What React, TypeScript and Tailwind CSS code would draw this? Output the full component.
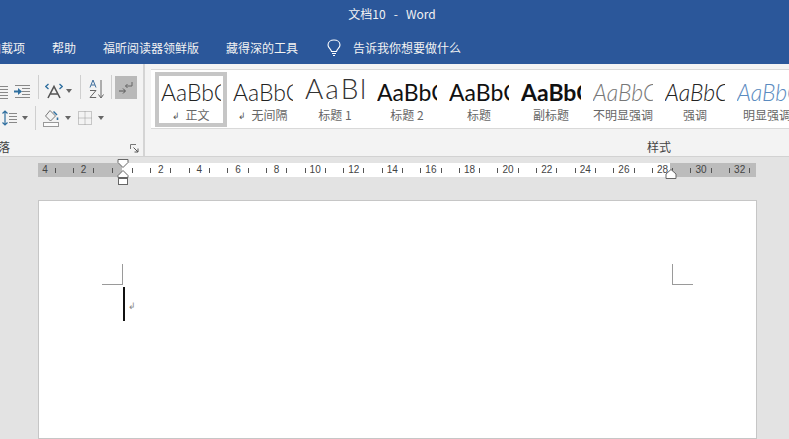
import React from "react";

const CJK = "font-['Noto_Sans_CJK_SC','Noto_Sans',sans-serif]";

const TABS = [
  { label: "加载项", className: "-ml-[11px] w-[63px]" },
  { label: "帮助", className: "w-[51px]" },
  { label: "福昕阅读器领鲜版", className: "w-[123px]" },
  { label: "藏得深的工具", className: "w-[101px]" },
];

const STYLES = [
  { label: "正文", mark: true, text: "AaBbC", className: "text-[#222] font-light text-[23px]", active: true },
  { label: "无间隔", mark: true, text: "AaBbC", className: "text-[#222] font-light text-[23px]" },
  { label: "标题 1", text: "AaBl", className: "text-[#333] font-light text-[28px] tracking-[2px] -mt-[4px] pb-[1px]" },
  { label: "标题 2", text: "AaBbC", className: "text-[#111] font-normal text-[23px]" },
  { label: "标题", text: "AaBbC", className: "text-[#111] font-normal text-[23px]" },
  { label: "副标题", text: "AaBbC", className: "text-[#111] font-bold text-[23px]" },
  { label: "不明显强调", text: "AaBbC", className: "text-[#777] font-light italic text-[23px]" },
  { label: "强调", text: "AaBbC", className: "text-[#222] font-light italic text-[23px]" },
  { label: "明显强调", text: "AaBbC", className: "text-[#5b8bc0] font-light italic text-[23px]" },
];

const RULER = [4, 2, 0, 2, 4, 6, 8, 10, 12, 14, 16, 18, 20, 22, 24, 26, 28, 30, 32];

function Caret() {
  return <span className="block h-0 w-0 border-x-[3.5px] border-t-[4px] border-x-transparent border-t-[#666]" />;
}

function Sep({ className }: { className: string }) {
  return <span className={`block h-[24px] w-px bg-[#cfcfcf] ${className}`} />;
}

function Launcher() {
  return (
    <svg width="9" height="9" viewBox="0 0 9 9" fill="none" stroke="#777" strokeWidth="1">
      <path d="M0.5 5V0.5H6" />
      <path d="M3.5 3.5L8 8M8 4.5V8H4.5" stroke="#555" />
    </svg>
  );
}

function Outdent() {
  return (
    <svg width="8" height="14" viewBox="0 0 8 14" stroke="#888" strokeWidth="1">
      <path d="M0 1.5H8M0 4.5H8M0 7.5H8M0 10.5H8M0 13.5H8" />
    </svg>
  );
}

function Indent() {
  return (
    <svg width="17" height="14" viewBox="0 0 17 14" fill="none">
      <path d="M1 0.5H16M8 3.5H16M8 6.5H16M8 9.5H16M1 12.5H16" stroke="#888" />
      <path d="M0 6.5H5" stroke="#2f6f9f" strokeWidth="2" />
      <path d="M4 3L8 6.5L4 10Z" fill="#2f6f9f" />
    </svg>
  );
}

function AsianLayout() {
  return (
    <svg width="18" height="16" viewBox="0 0 18 16" fill="none">
      <path d="M3.5 1L0.8 3.5L3.5 6M14.5 1L17.2 3.5L14.5 6" stroke="#2f6f9f" strokeWidth="1.3" />
      <path d="M3 15L9 3.5L15 15M5.5 11H12.5" stroke="#555" strokeWidth="1.6" />
    </svg>
  );
}

function SortAZ() {
  return (
    <svg width="15" height="20" viewBox="0 0 15 20" fill="none">
      <path d="M1 8.5L4 1L7 8.5M2.2 6H5.8" stroke="#3d6d9c" strokeWidth="1" />
      <path d="M1 11.5H7L1 18.5H7.2" stroke="#666" strokeWidth="1" />
      <path d="M12 1V18.5M9.5 15.5L12 19L14.5 15.5" stroke="#666" strokeWidth="1" />
    </svg>
  );
}

function ParagraphMark() {
  return (
    <svg width="16" height="16" viewBox="0 0 16 16" fill="none">
      <path d="M14 2V6H7.5M9.5 4L7.5 6L9.5 8" stroke="#666" strokeWidth="1" />
      <path d="M1 11H7M5 8.5L7.5 11L5 13.5" stroke="#555" strokeWidth="1" />
    </svg>
  );
}

function LineSpacing() {
  return (
    <svg width="15" height="16" viewBox="0 0 15 16" fill="none">
      <path d="M3 1V15M0.5 3.5L3 1L5.5 3.5M0.5 12.5L3 15L5.5 12.5" stroke="#2f6f9f" strokeWidth="1.2" />
      <path d="M7 3.5H15M7 6.5H15M7 9.5H15M7 12.5H15" stroke="#888" />
    </svg>
  );
}

function Shading() {
  return (
    <svg width="17" height="18" viewBox="0 0 17 18" fill="none">
      <path d="M7 1.5L2.5 7L7.5 12L12.5 7Z" stroke="#777" />
      <path d="M10.5 2.5L14 6" stroke="#2f6f9f" strokeWidth="1.4" />
      <path d="M14.5 8.5V11" stroke="#2f6f9f" strokeWidth="1.6" />
      <rect x="0.5" y="13.5" width="15" height="4" fill="#fbfbfb" stroke="#999" />
    </svg>
  );
}

function Borders() {
  return (
    <svg width="14" height="14" viewBox="0 0 14 14" fill="none" stroke="#999" strokeDasharray="1 1">
      <path d="M0.5 0.5H13.5V13.5H0.5ZM7 0.5V13.5M0.5 7H13.5" />
    </svg>
  );
}

function Bulb() {
  return (
    <svg width="14" height="18" viewBox="0 0 14 18" fill="none" stroke="#fff" strokeWidth="1.1">
      <path d="M4.5 12.5C4.2 10 1 8.8 1 5.9C1 3 3.7 1 7 1C10.3 1 13 3 13 5.9C13 8.8 9.8 10 9.5 12.5Z" />
      <path d="M5 14.5H9M6 16.5H8" />
    </svg>
  );
}

function RulerCell({ value }: { value: number }) {
  return (
    <div className="grid w-[38.6px] shrink-0 grid-cols-[1fr_19.3px_1fr] items-center">
      <span className="h-[5px] w-px justify-self-end bg-[#555]" />
      <span className="text-center text-[10px] leading-[14px] text-[#444]">{value === 0 ? "" : value}</span>
      <span className="h-[5px] w-px bg-[#555]" />
    </div>
  );
}

export default function App() {
  return (
    <div className={`flex h-[439px] w-[789px] flex-col overflow-hidden bg-[#e3e3e3] ${CJK}`}>
      <div className="flex h-[29px] shrink-0 items-center justify-center whitespace-pre bg-[#2b579a] pb-[2px] pr-[5px] text-[12px] text-[#f2f2f2]">
        文档10   -   Word
      </div>

      <div className="flex h-[35px] shrink-0 items-center bg-[#2b579a] pt-[3px] text-[12px] text-[#f2f2f2]">
        {TABS.map((tab) => (
          <span key={tab.label} className={`shrink-0 whitespace-nowrap ${tab.className}`}>
            {tab.label}
          </span>
        ))}
        <span className="mr-[12px] block">
          <Bulb />
        </span>
        <span>告诉我你想要做什么</span>
      </div>

      <div className="flex h-[93px] shrink-0 border-b border-[#d2d2d2] bg-[#f3f3f3]">
        <div className="flex w-[145px] shrink-0 flex-col border-r-2 border-[#d4d4d4]">
          <div className="flex h-[35px] items-end">
            <Outdent />
            <span className="ml-[6px]"><Indent /></span>
            <Sep className="ml-[7px]" />
            <span className="ml-[6px]"><AsianLayout /></span>
            <span className="mb-[6px] ml-[3px]"><Caret /></span>
            <Sep className="ml-[8px]" />
            <span className="ml-[8px]"><SortAZ /></span>
            <Sep className="ml-[7px]" />
            <span className="ml-[3px] flex h-[23px] w-[22px] items-center justify-center bg-[#b9b9b9]">
              <ParagraphMark />
            </span>
          </div>
          <div className="mt-[9px] flex h-[20px] items-center">
            <span className="ml-[2px]"><LineSpacing /></span>
            <span className="ml-[5px]"><Caret /></span>
            <Sep className="ml-[7px]" />
            <span className="ml-[7px]"><Shading /></span>
            <span className="ml-[5px]"><Caret /></span>
            <span className="ml-[7px]"><Borders /></span>
            <span className="ml-[6px]"><Caret /></span>
          </div>
          <div className="mt-[11px] flex items-center justify-between pr-[4px] text-[12px] leading-[16px] text-[#444]">
            <span className="-ml-[2px]">落</span>
            <span className="mt-[2px]"><Launcher /></span>
          </div>
        </div>

        <div className="min-w-0 flex-1 pt-[5px]">
          <div className="ml-[6px] flex h-[60px] border-y border-[#d9d9d9] bg-white pl-[4px] pt-[2px]">
            {STYLES.map((style) => (
              <div
                key={style.label}
                className={`flex h-[55px] w-[72px] shrink-0 flex-col items-center overflow-hidden border-[4px] font-['Lato','Noto_Sans',sans-serif] ${
                  style.active ? "border-[#c6c6c6]" : "border-transparent"
                }`}
              >
                <div className="h-[32px] w-[60px] overflow-hidden whitespace-nowrap">
                  <span className={`block leading-[32px] ${style.className}`}>{style.text}</span>
                </div>
                <div className={`flex h-[16px] items-center whitespace-nowrap text-[12px] text-[#666] ${CJK}`}>
                  {style.mark && <span className="mr-[5px] text-[9px] leading-none text-[#555]">↲</span>}
                  <span className="leading-[16px]">{style.label}</span>
                </div>
              </div>
            ))}
          </div>
          <div className="pl-[502px] pt-[10px] text-[12px] leading-[16px] text-[#444]">样式</div>
        </div>
      </div>

      <div className="ml-[38px] mt-[6px] flex h-[14px] w-[718px] shrink-0 overflow-hidden bg-[linear-gradient(to_right,#bcbcbc_84px,#fff_84px,#fff_632px,#bcbcbc_632px)] font-['Liberation_Sans',sans-serif]">
        <div className="-ml-[12.3px] flex">
          {RULER.map((value, i) => (
            <RulerCell key={i} value={value} />
          ))}
        </div>
      </div>

      {/* indent markers sit on top of the ruler */}
      <div className="relative h-0 shrink-0">
        <svg className="absolute left-[117px] top-[-18px]" width="12" height="27" viewBox="0 0 12 27" fill="none" stroke="#666">
          <path d="M1 0.5H11V3.5L6 8.5L1 3.5Z" fill="#fff" />
          <path d="M6 11.5L11 16.5V18.5H1V16.5Z" fill="#fff" />
          <rect x="1.5" y="19.5" width="9" height="6" fill="#fff" />
        </svg>
        <svg className="absolute left-[665px] top-[-8px]" width="12" height="10" viewBox="0 0 12 10" fill="none" stroke="#666">
          <path d="M1 5L6 0.5L11 5V9.5H1Z" fill="#fff" />
        </svg>
      </div>

      <div className="ml-[38px] mt-[23px] flex w-[719px] flex-1 flex-col border border-[#c6c6c6] bg-white px-[63px] pt-[63px]">
        <div className="flex justify-between">
          <span className="block h-[21px] w-[21px] border-b border-r border-[#9a9a9a]" />
          <span className="block h-[21px] w-[21px] border-b border-l border-[#9a9a9a]" />
        </div>
        <div className="ml-[21px] mt-[2px] flex items-start">
          <span className="block h-[34px] w-[2px] bg-[#111]" />
          <span className="ml-[3px] mt-[14px] text-[9px] leading-[10px] text-[#888]">↲</span>
        </div>
      </div>
    </div>
  );
}
